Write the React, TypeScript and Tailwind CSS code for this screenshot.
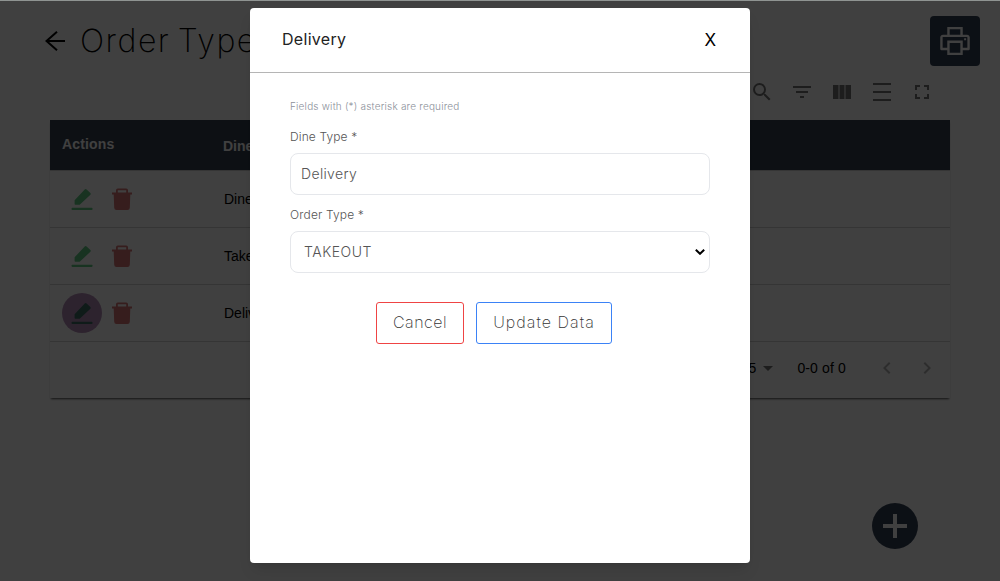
import React from "react";
import { AiOutlinePrinter } from "react-icons/ai";
import { MdSearch, MdFilterList, MdChevronLeft, MdChevronRight, MdArrowDropDown } from "react-icons/md";

function Svg({ d, size = 24 }: { d: string; size?: number }) {
  return (
    <svg width={size} height={size} viewBox="0 0 24 24" fill="currentColor">
      <path d={d} />
    </svg>
  );
}

function Row({ name, active = false }: { name: string; active?: boolean }) {
  return (
    <div className="flex h-[57px] items-center border-b border-[#d4d4d4]">
      <div className="flex w-[174px] items-center pb-px pl-3">
        <span
          className={
            active
              ? "flex size-10 items-center justify-center rounded-full bg-[#b48cb8] text-[#3f6b66]"
              : "flex size-10 items-center justify-center text-[#62c985]"
          }
        >
          <svg width="24" height="24" viewBox="0 0 24 24" fill="currentColor">
            <path d="M4.600 13.300 14.700 2.400q.900-.900 1.900 0l3.800 3.500q.800.900 0 1.900L9.700 17.700H5.300q-.700 0-.700-.700zM2.400 20.700h19.300c1.200 0 1.200 2.300 0 2.300H2.400c-1.200 0-1.200-2.300 0-2.300z" />
          </svg>
        </span>
        <span className="flex size-10 items-center justify-center text-[#d67474]">
          <svg width="24" height="24" viewBox="0 0 24 24" fill="currentColor">
            <path
              fillRule="evenodd"
              d="M2 5.500H6V3.200Q6 1.500 7.700 1.500H16.300Q18 1.500 18 3.200V5.500H22V7.500H20.300L19.800 20.800Q19.700 23 17.500 23H6.500Q4.300 23 4.200 20.800L3.700 7.500H2ZM7.800 5.500H16.200V3.300H7.800Z"
            />
          </svg>
        </span>
      </div>
      <span>{name}</span>
    </div>
  );
}

export default function App() {
  return (
    <div className="relative h-[581px] w-[1000px] overflow-hidden bg-white font-['Liberation_Sans',sans-serif] text-sm text-black">
      <header className="flex h-[82px] items-center justify-between pr-5 pl-[45px]">
        <div className="flex items-center gap-[15px]">
          <svg width="20" height="20" viewBox="0 0 20 20" fill="none" stroke="currentColor" strokeWidth="2">
            <path d="M20 10H1.500M12 .800 1.500 10 12 19.200" />
          </svg>
          <h1 className="font-['Inter',sans-serif] text-[32px] leading-10 font-extralight tracking-[1.5px] [word-spacing:-3px]">
            Order Type
          </h1>
        </div>
        <button className="flex size-[50px] items-center justify-center rounded bg-[#334155] text-white">
          <AiOutlinePrinter size={36} />
        </button>
      </header>
      <div className="flex h-[38px] items-start justify-end gap-4 pr-[66px] text-[#757575]">
        <MdSearch size={24} className="-mt-0.5" />
        <MdFilterList size={24} className="-mt-0.5" />
        <Svg d="M9.500 17h5V3h-5zM3 17h5.500V3H3zM15.500 3v14H21V3z" />
        <Svg d="M3 1h18v2H3zm0 16h18v2H3zm0-8h18v2H3z" />
        <Svg d="M7 12H5v5h5v-2H7zM5 8h2V5h3V3H5zm12 7h-3v2h5v-5h-2zM14 3v2h3v3h2V3z" />
      </div>
      <main className="mx-[50px] h-[278px] shadow-[0_2px_2px_-1px_rgba(0,0,0,0.7)]">
        <div className="flex h-[51px] items-center border-b border-[#d4d4d4] bg-[#374151] bg-clip-padding font-bold text-white">
          <span className="w-[173px] pb-0.5 pl-3 tracking-[0.15px]">Actions</span>
          <span className="pt-0.5">Dine Type</span>
        </div>
        <Row name="Dine In" />
        <Row name="Takeout" />
        <Row name="Delivery" active />
        <div className="flex h-[52px] items-center justify-end pr-[11px]">
          <span>5</span>
          <MdArrowDropDown size={24} className="text-[#757575]" />
          <span className="ml-[17px] tracking-[0.14px]">0-0 of 0</span>
          <MdChevronLeft size={24} className="ml-[29px] text-[#b4b4b4]" />
          <MdChevronRight size={24} className="ml-4 text-[#b4b4b4]" />
        </div>
      </main>
      <button className="absolute top-[503px] left-[872px] flex size-[46px] items-center justify-center rounded-full bg-[#334155] text-white">
        <Svg d="M10 0h4v10h10v4H14v10h-4V14H0v-4h10z" />
      </button>

      <div className="absolute inset-0 flex justify-center border-t border-[#8f9492] bg-black/75 pt-[7px] font-['Inter',sans-serif] font-light">
        <section className="h-[555px] w-[500px] rounded bg-white shadow-lg">
          <div className="flex h-[65px] items-center justify-between border-b border-[#b5b5b5] pr-[34px] pl-8">
            <h2 className="pb-0.5 text-base font-normal tracking-[0.3px] text-[#222]">Delivery</h2>
            <button className="text-[17px] leading-6 font-normal text-black">X</button>
          </div>
          <form className="flex flex-col px-10 pt-[26px] text-[#555]">
            <p className="h-[15px] text-[10px] leading-[15px] tracking-[0.2px] whitespace-nowrap text-[#8b8f99]">
              Fields with (*) asterisk are required
            </p>
            <label className="mt-[14px] h-[18px] text-xs leading-[18px] tracking-[0.12px]">Dine Type *</label>
            <div className="mt-[7px] flex h-[42px] items-center rounded-lg border border-[#e5e7eb] px-[10px] text-sm tracking-[0.35px]">
              Delivery
            </div>
            <label className="mt-[11px] h-[18px] text-xs leading-[18px] tracking-[0.15px]">Order Type *</label>
            <div className="mt-[7px] flex h-[42px] items-center justify-between rounded-lg border border-[#e5e7eb] pr-1 pl-[13px] text-sm tracking-[0.5px]">
              TAKEOUT
              <svg width="10" height="6" viewBox="0 0 10 6" fill="none" stroke="black" strokeWidth="2">
                <path d="m.8.8 4.200 4L9.200.8" />
              </svg>
            </div>
            <div className="mt-[29px] ml-[86px] flex gap-3 text-base font-extralight text-[#333]">
              <button type="button" className="h-[42px] w-[88px] rounded-[3px] border border-[#ef4444] pb-0.5 tracking-[0.5px]">
                Cancel
              </button>
              <button type="button" className="h-[42px] w-[136px] rounded-[3px] border border-[#3b82f6] pb-0.5 tracking-[1.050px]">
                Update Data
              </button>
            </div>
          </form>
        </section>
      </div>
    </div>
  );
}
